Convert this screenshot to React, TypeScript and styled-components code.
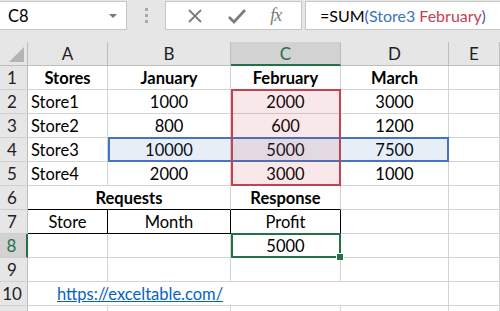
import React from 'react';
import styled, { createGlobalStyle } from 'styled-components';

const GlobalStyle = createGlobalStyle`
  html, body {
    margin: 0;
    padding: 0;
    background: #ffffff;
  }
  body {
    font-family: Lato, 'Open Sans', sans-serif;
    color: #000;
  }
  * {
    box-sizing: border-box;
  }
`;

const GRID = '#d4d4d4';
const HEADER_BG = '#e6e6e6';
const GREEN = '#217346';

type Cell = {
  text?: string;
  align?: 'left' | 'center';
  bold?: boolean;
  span?: number;
  link?: boolean;
  boxRight?: boolean;
  boxBottom?: boolean;
  noRight?: boolean;
  pad?: number;
};

const columns = ['A', 'B', 'C', 'D', 'E'];

const rows: Cell[][] = [
  [
    { text: 'Stores', bold: true, align: 'center' },
    { text: 'January', bold: true, align: 'center' },
    { text: 'February', bold: true, align: 'center' },
    { text: 'March', bold: true, align: 'center' },
    {},
  ],
  [{ text: 'Store1' }, { text: '1000', align: 'center' }, { text: '2000', align: 'center' }, { text: '3000', align: 'center' }, {}],
  [{ text: 'Store2' }, { text: '800', align: 'center' }, { text: '600', align: 'center' }, { text: '1200', align: 'center' }, {}],
  [{ text: 'Store3' }, { text: '10000', align: 'center' }, { text: '5000', align: 'center' }, { text: '7500', align: 'center' }, {}],
  [{ text: 'Store4' }, { text: '2000', align: 'center' }, { text: '3000', align: 'center' }, { text: '1000', align: 'center' }, {}],
  [
    { text: 'Requests', bold: true, align: 'center', span: 2, boxBottom: true },
    { text: 'Response', bold: true, align: 'center', boxBottom: true },
    {},
    {},
  ],
  [
    { text: 'Store', align: 'center', boxRight: true, boxBottom: true },
    { text: 'Month', align: 'center', boxRight: true, boxBottom: true },
    { text: 'Profit', align: 'center', boxRight: true, boxBottom: true },
    {},
    {},
  ],
  [{}, {}, { text: '5000', align: 'center' }, {}, {}],
  [{}, {}, {}, {}, {}],
  [{ text: 'https://exceltable.com/', link: true, span: 3, noRight: true, pad: 29 }, {}, {}],
  [{}, {}, {}, {}, {}],
];

// grid column where each cell of a row starts (col 1 is the row header)
const placeRow = (row: Cell[]) => {
  let col = 2;
  return row.map((cell) => {
    const start = col;
    col += cell.span ?? 1;
    return { cell, start };
  });
};

export default function App() {
  return (
    <>
      <GlobalStyle />
      <Window>
        <FormulaBar>
          <NameBox>
            <span>C8</span>
            <DropCaret />
          </NameBox>
          <Grip>
            <i />
            <i />
            <i />
          </Grip>
          <ButtonBox>
            <svg width="18" height="18" viewBox="0 0 18 18">
              <path d="M3 3 L15 15 M15 3 L3 15" stroke="#7b7b7b" strokeWidth="1.8" fill="none" />
            </svg>
            <svg width="20" height="18" viewBox="0 0 20 18">
              <path d="M2 10 L7 15 L18 3" stroke="#7b7b7b" strokeWidth="2.6" fill="none" />
            </svg>
            <FxLabel>fx</FxLabel>
          </ButtonBox>
          <FormulaInput>
            =SUM<Paren>(</Paren>
            <RefBlue>Store3</RefBlue>{' '}
            <RefRed>February</RefRed>
            <Paren>)</Paren>
          </FormulaInput>
        </FormulaBar>

        <Sheet>
          <Corner>
            <CornerTriangle />
          </Corner>
          {columns.map((c) => (
            <ColHeader key={c} $active={c === 'C'}>
              {c}
            </ColHeader>
          ))}

          {rows.map((row, ri) => (
            <React.Fragment key={ri}>
              <RowHeader $row={ri + 2} $active={ri === 7}>
                {ri + 1}
              </RowHeader>
              {placeRow(row).map(({ cell, start }) => (
                <SheetCell
                  key={start}
                  $row={ri + 2}
                  $col={start}
                  $span={cell.span ?? 1}
                  $align={cell.align ?? 'left'}
                  $bold={!!cell.bold}
                  $boxRight={!!cell.boxRight}
                  $boxBottom={!!cell.boxBottom}
                  $noRight={!!cell.noRight}
                  $pad={cell.pad ?? 3}
                >
                  {cell.link ? <Link href="#">{cell.text}</Link> : cell.text}
                </SheetCell>
              ))}
            </React.Fragment>
          ))}

          <RangeBox $col="3 / 6" $row="5 / 6" $color="#4472c4" $fill="rgba(68, 114, 196, 0.12)" $z={2} />
          <RangeBox $col="4 / 5" $row="3 / 7" $color="#c4414f" $fill="rgba(196, 65, 79, 0.12)" $z={3} />
          <Selection />
        </Sheet>
      </Window>
    </>
  );
}

const Window = styled.div`
  width: 500px;
  height: 311px;
  overflow: hidden;
  background: #fff;
`;

const FormulaBar = styled.div`
  display: flex;
  align-items: flex-start;
  height: 42px;
  padding-top: 1px;
  background: ${HEADER_BG};
`;

const NameBox = styled.div`
  display: flex;
  align-items: center;
  justify-content: space-between;
  width: 127px;
  height: 29px;
  padding: 0 9px 0 8px;
  background: #fff;
  border: 1px solid #c6c6c6;
  border-left: none;
  font-size: 16.5px;
`;

const DropCaret = styled.span`
  width: 0;
  height: 0;
  border-left: 4px solid transparent;
  border-right: 4px solid transparent;
  border-top: 4px solid #777;
`;

const Grip = styled.div`
  width: 38px;
  height: 29px;
  display: flex;
  flex-direction: column;
  align-items: center;
  justify-content: center;
  gap: 3px;

  i {
    display: block;
    width: 3px;
    height: 3px;
    background: #a8a8a8;
  }
`;

const ButtonBox = styled.div`
  width: 137px;
  height: 29px;
  display: flex;
  align-items: center;
  justify-content: space-around;
  padding: 0 8px;
  background: #fff;
  border: 1px solid #c6c6c6;
`;

const FxLabel = styled.span`
  font-family: 'Liberation Serif', serif;
  font-style: italic;
  font-size: 18px;
  color: #7b7b7b;
  letter-spacing: -1px;
`;

const FormulaInput = styled.div`
  flex: 1;
  height: 29px;
  margin-left: 3px;
  padding-left: 14px;
  line-height: 27px;
  background: #fff;
  border: 1px solid #c6c6c6;
  border-right: none;
  font-size: 16px;
  white-space: nowrap;
`;

const Paren = styled.span`
  color: #3a5fae;
`;

const RefBlue = styled.span`
  color: #3a72c8;
`;

const RefRed = styled.span`
  color: #c4414f;
`;

const Sheet = styled.div`
  display: grid;
  grid-template-columns: 28px 80px 123px 110px 108px 51px;
  grid-auto-rows: 24px;
  font-size: 16.5px;
`;

const Corner = styled.div`
  position: relative;
  grid-row: 1;
  grid-column: 1;
  background: ${HEADER_BG};
  border-right: 1px solid #bdbdbd;
  border-bottom: 1px solid #bdbdbd;
`;

const CornerTriangle = styled.div`
  position: absolute;
  right: 3px;
  bottom: 3px;
  width: 15px;
  height: 15px;
  background: #b4b4b4;
  clip-path: polygon(100% 0, 100% 100%, 0 100%);
`;

const ColHeader = styled.div<{ $active: boolean }>`
  grid-row: 1;
  display: flex;
  align-items: center;
  justify-content: center;
  background: ${(p) => (p.$active ? '#d2d2d2' : HEADER_BG)};
  color: ${(p) => (p.$active ? GREEN : '#222')};
  border-right: 1px solid #bdbdbd;
  border-bottom: ${(p) => (p.$active ? `2px solid ${GREEN}` : '1px solid #bdbdbd')};
  font-size: 17px;
`;

const RowHeader = styled.div<{ $row: number; $active: boolean }>`
  grid-row: ${(p) => p.$row};
  grid-column: 1;
  display: flex;
  align-items: center;
  justify-content: center;
  padding-right: 3px;
  background: ${(p) => (p.$active ? '#d2d2d2' : HEADER_BG)};
  color: ${(p) => (p.$active ? GREEN : '#222')};
  border-right: ${(p) => (p.$active ? `2px solid ${GREEN}` : '1px solid #bdbdbd')};
  border-bottom: 1px solid #cfcfcf;
  font-size: 17px;
`;

const SheetCell = styled.div<{
  $row: number;
  $col: number;
  $span: number;
  $align: 'left' | 'center';
  $bold: boolean;
  $boxRight: boolean;
  $boxBottom: boolean;
  $noRight: boolean;
  $pad: number;
}>`
  grid-row: ${(p) => p.$row};
  grid-column: ${(p) => p.$col} / span ${(p) => p.$span};
  display: flex;
  align-items: center;
  justify-content: ${(p) => (p.$align === 'center' ? 'center' : 'flex-start')};
  padding: 0 3px 0 ${(p) => (p.$align === 'center' ? 3 : p.$pad)}px;
  font-weight: ${(p) => (p.$bold ? 700 : 400)};
  white-space: nowrap;
  border-right: ${(p) => (p.$noRight ? 'none' : `1px solid ${p.$boxRight ? '#000' : GRID}`)};
  border-bottom: 1px solid ${(p) => (p.$boxBottom ? '#000' : GRID)};
`;

const Link = styled.a`
  color: #0563c1;
  text-decoration: underline;
`;

const RangeBox = styled.div<{ $col: string; $row: string; $color: string; $fill: string; $z: number }>`
  grid-column: ${(p) => p.$col};
  grid-row: ${(p) => p.$row};
  margin: -1px 0 0 0;
  border: 2px solid ${(p) => p.$color};
  background: ${(p) => p.$fill};
  z-index: ${(p) => p.$z};
  pointer-events: none;
`;

const Selection = styled.div`
  grid-column: 4 / 5;
  grid-row: 9 / 10;
  position: relative;
  margin: -1px 0 0 0;
  border: 2px solid ${GREEN};
  z-index: 4;
  pointer-events: none;

  &::after {
    content: '';
    position: absolute;
    right: -5px;
    bottom: -5px;
    width: 6px;
    height: 6px;
    background: ${GREEN};
    border: 1px solid #fff;
  }
`;
